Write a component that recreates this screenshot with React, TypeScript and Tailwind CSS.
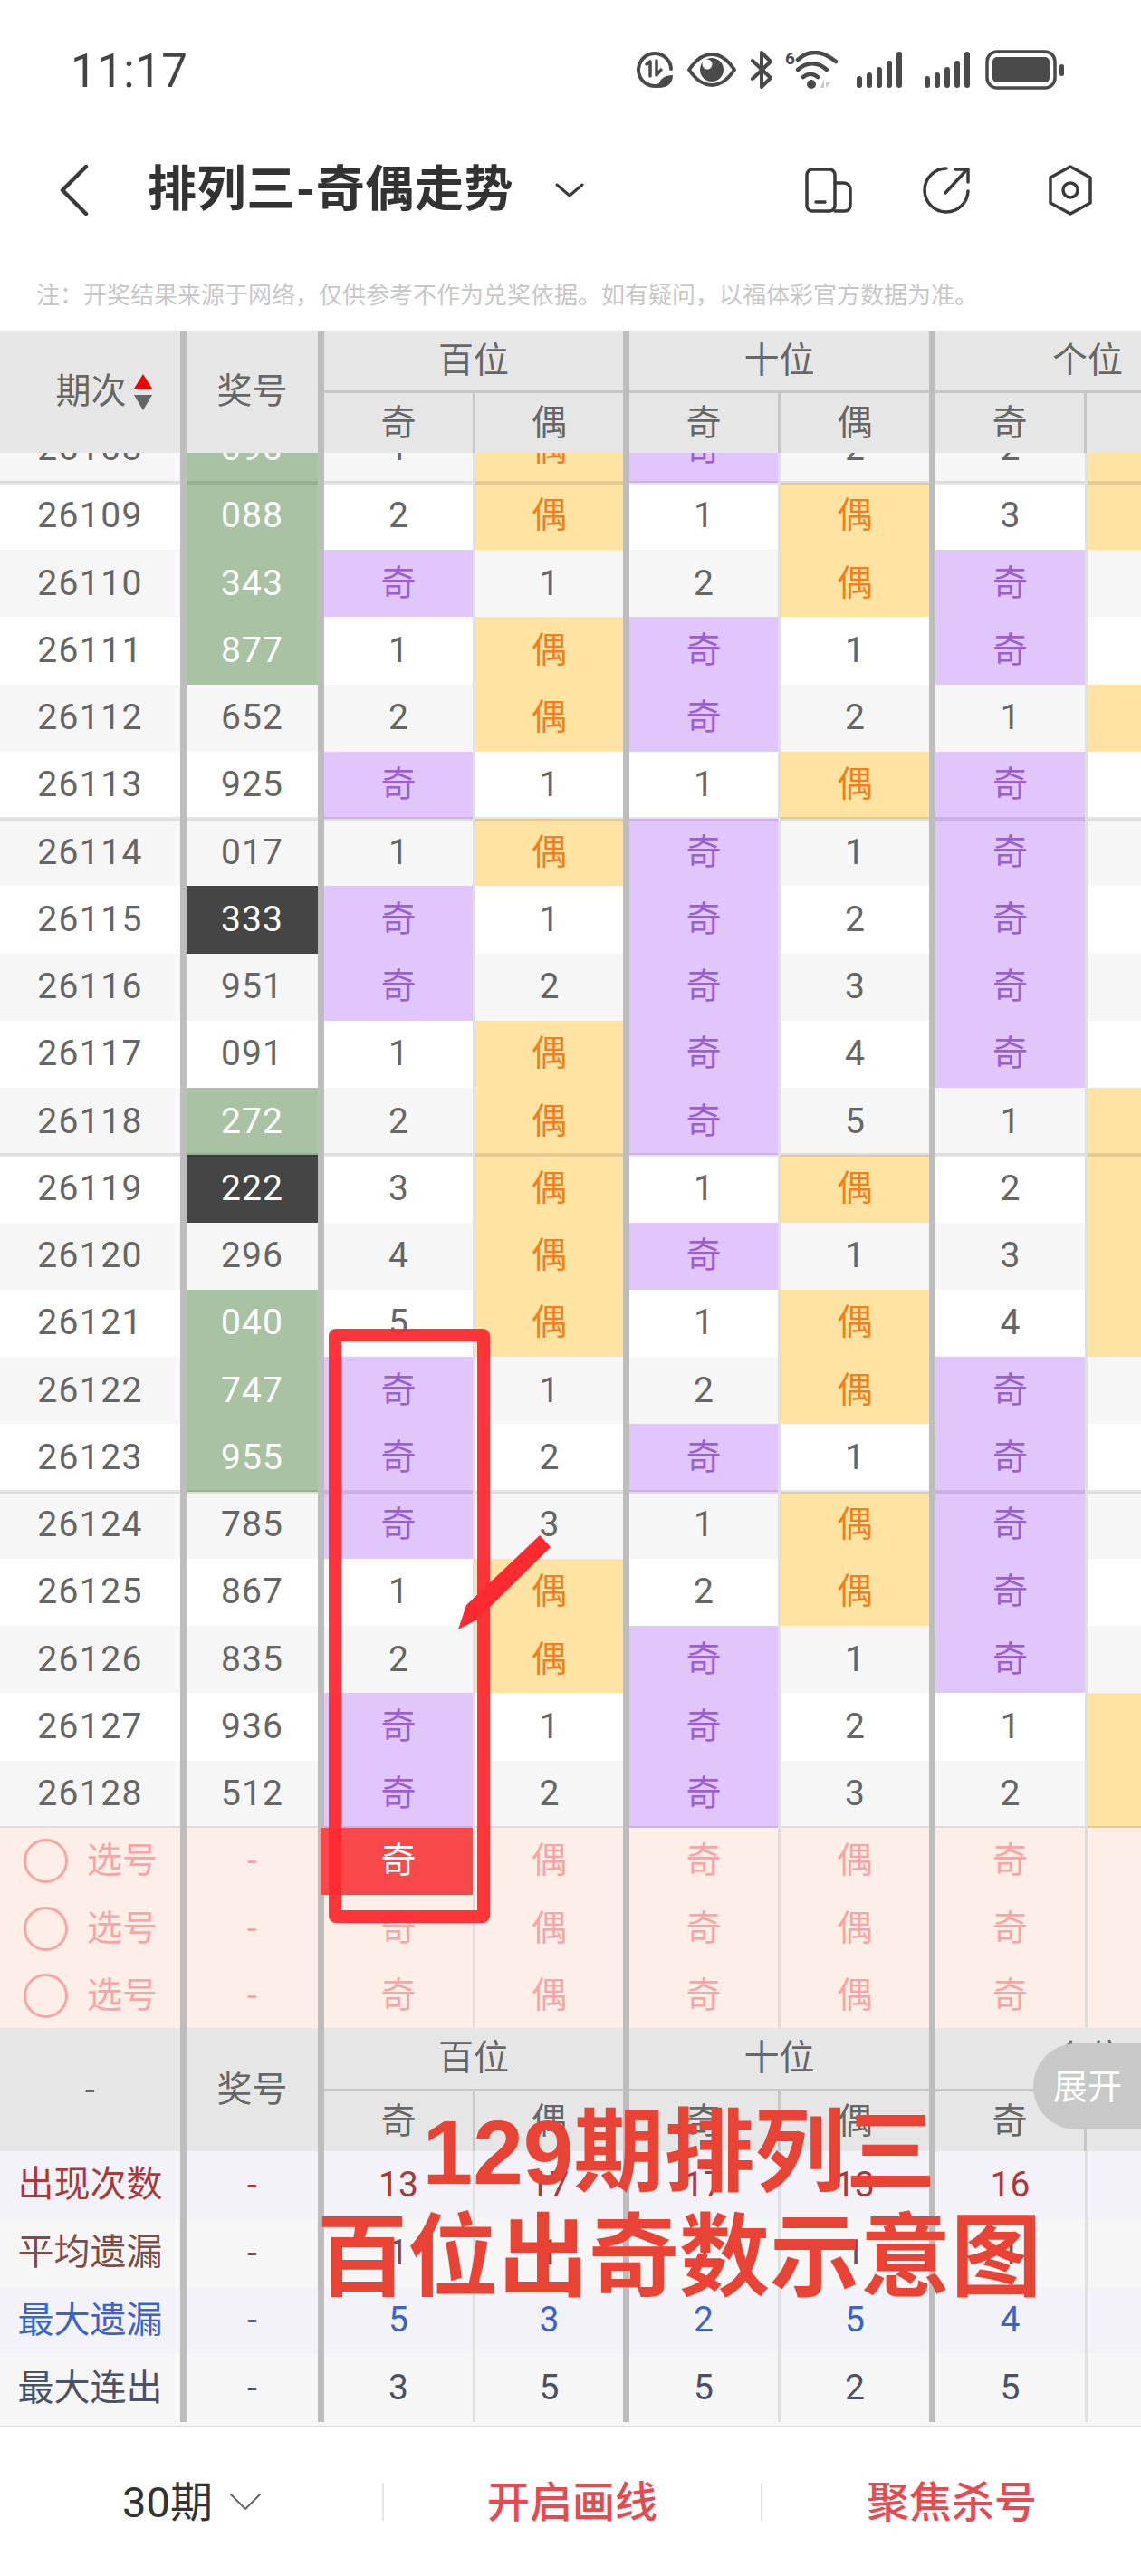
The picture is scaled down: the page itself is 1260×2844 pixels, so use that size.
import React from 'react';

const RAW = `26108 090 g 1 偶 奇 2 2 偶
26109 088 g 2 偶 1 偶 3 偶
26110 343 g 奇 1 2 偶 奇 1
26111 877 g 1 偶 奇 1 奇 2
26112 652 n 2 偶 奇 2 1 偶
26113 925 n 奇 1 1 偶 奇 1
26114 017 n 1 偶 奇 1 奇 2
26115 333 d 奇 1 奇 2 奇 3
26116 951 n 奇 2 奇 3 奇 4
26117 091 n 1 偶 奇 4 奇 5
26118 272 g 2 偶 奇 5 1 偶
26119 222 d 3 偶 1 偶 2 偶
26120 296 n 4 偶 奇 1 3 偶
26121 040 g 5 偶 1 偶 4 偶
26122 747 g 奇 1 2 偶 奇 1
26123 955 g 奇 2 奇 1 奇 2
26124 785 n 奇 3 1 偶 奇 3
26125 867 n 1 偶 2 偶 奇 4
26126 835 n 2 偶 奇 1 奇 5
26127 936 n 奇 1 奇 2 1 偶
26128 512 n 奇 2 奇 3 2 偶`;

const rows = RAW.split('\n').map((l) => {
  const p = l.split(' ');
  return { id: p[0], num: p[1], kind: p[2], vals: p.slice(3) };
});

const NOTE =
  '注\uFF1A开奖结果来源于网络\uFF0C仅供参考不作为兑奖依据\u3002如有疑问\uFF0C以福体彩官方数据为准\u3002';

const GRID = 'grid grid-cols-[206px_152px_167px_170px_167px_171px_168px_168px] w-[1369px]';
const THICK = 'border-r-[7px] border-r-[#bdbdbd]';
const THIN = 'border-r-[3px] border-r-[#e0e0e0]';
const THIN_SEL = 'border-r-[3px] border-r-[#e2dcd8]';
const THIN_HEAD = 'border-r-[3px] border-r-[#c6c6c6]';
const BORDERS = [THIN, THICK, THIN, THICK, THIN, 'border-r-0'];
const SEL_BORDERS = [THIN_SEL, THICK, THIN_SEL, THICK, THIN_SEL, 'border-r-0'];
const HEAD_BORDERS = [THIN_HEAD, THICK, THIN_HEAD, THICK, THIN_HEAD, 'border-r-0'];
const CELL = 'flex items-center justify-center min-w-0';

function sepClass(i: number) {
  if (i % 5 === 1) return 'shadow-[inset_0_2px_0_rgba(0,0,0,0.1)]';
  if (i % 5 === 0) return 'shadow-[inset_0_-2px_0_rgba(0,0,0,0.1)]';
  return '';
}

function HeaderBlock({ left, className }: { left: React.ReactNode; className: string }) {
  const groups = ['百位', '十位', '个位'];
  return (
    <div className={`${GRID} ${className} bg-[#e6e6e6] text-[#666666]`}>
      <div className={`${CELL} ${THICK}`}>{left}</div>
      <div className={`${CELL} ${THICK}`}>奖号</div>
      {groups.map((g, gi) => (
        <div key={g} className={`col-span-2 flex flex-col ${gi < 2 ? THICK : ''}`}>
          <div className={`${CELL} flex-1 border-b-[3px] border-b-[#c6c6c6]`}>{g}</div>
          <div className="grid grid-cols-[167px_1fr] h-[66px]">
            <div className={`${CELL} ${HEAD_BORDERS[0]}`}>奇</div>
            <div className={`${CELL}`}>偶</div>
          </div>
        </div>
      ))}
    </div>
  );
}

function DataRow({ r, i }: { r: (typeof rows)[number]; i: number }) {
  const bg = parseInt(r.id, 10) % 2 === 0 ? 'bg-[#f6f6f6]' : 'bg-white';
  const sep = sepClass(i);
  const numCls =
    r.kind === 'g'
      ? 'bg-[#a8c2a3] text-white'
      : r.kind === 'd'
        ? 'bg-[#454545] text-white'
        : `${bg} text-[#666666]`;
  return (
    <div className={`${GRID} h-[74.25px] text-[#666666]`}>
      <div className={`${CELL} ${THICK} ${bg} ${sep} tracking-[1.4px]`}>{r.id}</div>
      <div className={`${CELL} ${THICK} ${numCls} ${sep} tracking-[1px]`}>{r.num}</div>
      {r.vals.map((v, j) => {
        const c =
          v === '奇'
            ? 'bg-[#e1c6fb] text-[#9b5fd0]'
            : v === '偶'
              ? 'bg-[#fee3a2] text-[#f07f1f]'
              : bg;
        return (
          <div key={j} className={`${CELL} ${BORDERS[j]} ${c} ${sep}`}>
            {v}
          </div>
        );
      })}
    </div>
  );
}

function SelectRow({ first }: { first: boolean }) {
  const vals = ['奇', '偶', '奇', '偶', '奇', '偶'];
  return (
    <div className={`${GRID} h-[74.25px] bg-[#fdeee8] text-[#f7a5a5]`}>
      <div className={`flex items-center ${THICK} pl-[26px] gap-[21px]`}>
        <span className="w-[49px] h-[49px] rounded-full border-[3px] border-[#f7a5a5]" />
        <span>选号</span>
      </div>
      <div className={`${CELL} ${THICK}`}>-</div>
      {vals.map((v, j) => (
        <div
          key={j}
          className={
            first && j === 0
              ? `${CELL} ${SEL_BORDERS[j]} -ml-[4px] pl-[4px] bg-[#f9484a] text-white`
              : `${CELL} ${SEL_BORDERS[j]}`
          }
        >
          {v}
        </div>
      ))}
    </div>
  );
}

const STATS = [
  { label: '出现次数', color: 'text-[#a83a3e]', bg: 'bg-[#f2f2f8]', vals: ['13', '17', '17', '13', '16', '14'] },
  { label: '平均遗漏', color: 'text-[#7d4d48]', bg: 'bg-[#f6f6f6]', vals: ['1', '1', '1', '1', '1', '1'] },
  { label: '最大遗漏', color: 'text-[#3d63c6]', bg: 'bg-[#f2f2f8]', vals: ['5', '3', '2', '5', '4', '5'] },
  { label: '最大连出', color: 'text-[#4a5263]', bg: 'bg-[#f6f6f6]', vals: ['3', '5', '5', '2', '5', '3'] },
];

function StatusIcons() {
  return (
    <div className="flex items-center text-[#4a4a4a]">
      <svg width="40" height="42" viewBox="0 0 40 42" fill="none" stroke="currentColor">
        <path d="M26 38 A18 18 0 1 1 38 20" strokeWidth="4" strokeLinecap="round" />
        <path d="M11 15 L15 12 V28" strokeWidth="3.5" strokeLinecap="round" strokeLinejoin="round" />
        <path d="M22 11 V27 L27 21" strokeWidth="3.5" strokeLinecap="round" strokeLinejoin="round" />
        <path d="M24 41 C24 32 30 27 40 27 C40 36 34 41 24 41 Z" fill="currentColor" stroke="none" />
      </svg>
      <svg className="ml-[16px]" width="54" height="38" viewBox="0 0 54 38" fill="none">
        <path d="M2 19 C10 7 18 2 27 2 C36 2 44 7 52 19 C44 31 36 36 27 36 C18 36 10 31 2 19 Z" stroke="currentColor" strokeWidth="4" strokeLinejoin="round" />
        <circle cx="27" cy="19" r="13" fill="currentColor" />
        <circle cx="22" cy="13" r="5.5" fill="white" />
      </svg>
      <svg className="ml-[16px]" width="25" height="42" viewBox="0 0 25 42" fill="none" stroke="currentColor" strokeWidth="4" strokeLinecap="round" strokeLinejoin="round">
        <path d="M2 11 L22 30 L12 40 V24" />
        <path d="M2 31 L22 12 L12 2 V17" />
      </svg>
      <svg className="ml-[13px]" width="58" height="42" viewBox="0 0 58 42" fill="none">
        <text x="0" y="15" fontSize="19" fontWeight="700" fill="currentColor" fontFamily="Roboto, sans-serif">6</text>
        <path d="M14 10 C26 -1 40 -1 56 12" stroke="currentColor" strokeWidth="4.5" strokeLinecap="round" />
        <path d="M14 21 C24 12 36 12 46 21" stroke="currentColor" strokeWidth="4.5" strokeLinecap="round" />
        <path d="M20 29 C25 25 31 25 36 29" stroke="currentColor" strokeWidth="4.5" strokeLinecap="round" />
        <circle cx="29" cy="37" r="5" fill="currentColor" />
        <path d="M39 41 H43 V31 Z M45 31 V41 L50 35 H45 Z" fill="#c9c9c9" />
      </svg>
      {[0, 1].map((k) => (
        <svg key={k} className={k === 0 ? 'ml-[21px]' : 'ml-[24px]'} width="51" height="42" viewBox="0 0 51 42" fill="currentColor">
          <rect x="0" y="28" width="6" height="13" rx="3" />
          <rect x="11" y="24" width="6" height="17" rx="3" />
          <rect x="22" y="18" width="6" height="23" rx="3" />
          <rect x="33" y="11" width="6" height="30" rx="3" />
          <rect x="44" y="1" width="6" height="40" rx="3" />
        </svg>
      ))}
      <svg className="ml-[16px]" width="88" height="44" viewBox="0 0 88 44" fill="none">
        <rect x="2" y="2" width="75" height="40" rx="11" stroke="currentColor" strokeWidth="3.5" />
        <rect x="8" y="8" width="63" height="28" rx="5" fill="currentColor" />
        <rect x="82" y="16" width="5" height="13" rx="2.5" fill="currentColor" />
      </svg>
    </div>
  );
}

function NavBar() {
  return (
    <div className="h-[120px] flex items-center pl-[66px] pr-[53px]">
      <svg width="32" height="56" viewBox="0 0 32 56" fill="none" stroke="#3a3a3a" strokeWidth="4.5" strokeLinecap="round" strokeLinejoin="round">
        <path d="M29 2 L3 28 L29 54" />
      </svg>
      <span className="ml-[65px] text-[54px] tracking-[0.6px] leading-none font-bold text-[#333333] whitespace-nowrap">排列三-奇偶走势</span>
      <svg className="ml-[46px]" width="32" height="16" viewBox="0 0 32 16" fill="none" stroke="#3a3a3a" strokeWidth="3" strokeLinecap="round" strokeLinejoin="round">
        <path d="M2 2 L16 14 L30 2" />
      </svg>
      <svg className="ml-auto" width="52" height="50" viewBox="0 0 52 50" fill="none" stroke="#3a3a3a" strokeWidth="3.5" strokeLinecap="round" strokeLinejoin="round">
        <rect x="2" y="2" width="31" height="46" rx="6" />
        <path d="M33 17 H43 A7 7 0 0 1 50 24 V42 A6 6 0 0 1 44 48 H33" />
        <path d="M12 38 H22" />
      </svg>
      <svg className="ml-[78px]" width="52" height="52" viewBox="0 0 52 52" fill="none" stroke="#3a3a3a" strokeWidth="3.5" strokeLinecap="round" strokeLinejoin="round">
        <path d="M26 2 A24 24 0 1 0 50 27" />
        <path d="M25 29 L49 3" />
        <path d="M36 3 H50 V17" />
      </svg>
      <svg className="ml-[86px]" width="50" height="56" viewBox="0 0 50 56" fill="none" stroke="#3a3a3a" strokeWidth="3.5" strokeLinejoin="round">
        <path d="M25 2 L47 14 V42 L25 54 L3 42 V14 Z" />
        <circle cx="25" cy="28" r="8" />
      </svg>
    </div>
  );
}

export default function App() {
  return (
    <div className="relative w-[1260px] h-[2844px] bg-white overflow-hidden flex flex-col font-['Roboto','Noto_Sans_CJK_SC',sans-serif] text-[39px] leading-none">
      <div className="h-[150px] flex items-center justify-between pl-[78px] pr-[84px] pt-[4px]">
        <span className="text-[51px] text-[#444444] pt-[2px] tracking-[0.5px]">11:17</span>
        <StatusIcons />
      </div>
      <NavBar />
      <div className="h-[95px] pt-[43px] pl-[40px] text-[26px] text-[#c8c8c8] whitespace-nowrap">
        {NOTE}
      </div>

      <div className="flex flex-col overflow-hidden">
        <HeaderBlock
          className="h-[135px]"
          left={
            <span className="flex items-center gap-[8px] pl-[30px]">
              <span>期次</span>
              <svg width="20" height="40" viewBox="0 0 20 40">
                <path d="M10 0 L20 16 H0 Z" fill="#f00000" />
                <path d="M0 23 H20 L10 40 Z" fill="#666666" />
              </svg>
            </span>
          }
        />
        <div className="h-[1739px] overflow-hidden">
          <div className="-mt-[42px] pt-[0.5px]">
            {rows.map((r, i) => (
              <DataRow key={r.id} r={r} i={i} />
            ))}
            {[0, 1, 2].map((k) => (
              <SelectRow key={k} first={k === 0} />
            ))}
          </div>
        </div>
        <HeaderBlock className="h-[136px]" left={<span>-</span>} />
        {STATS.map((s) => (
          <div key={s.label} className={`${GRID} h-[74.75px] ${s.bg} ${s.color}`}>
            <div className={`${CELL} ${THICK} whitespace-nowrap text-[40px]`}>{s.label}</div>
            <div className={`${CELL} ${THICK}`}>-</div>
            {s.vals.map((v, j) => (
              <div key={j} className={`${CELL} ${BORDERS[j]}`}>
                {v}
              </div>
            ))}
          </div>
        ))}
        <div className="h-[6px] bg-[#f6f6f6] border-b-[2px] border-b-[#dddddd]" />
      </div>

      <div className="flex-1 flex items-center">
        <div className="w-[422px] flex items-center justify-center gap-[18px] pl-[2px] text-[47px] text-[#333333]">
          <span>30期</span>
          <svg width="36" height="20" viewBox="0 0 36 20" fill="none" stroke="#666666" strokeWidth="2" strokeLinecap="round" strokeLinejoin="round">
            <path d="M2 2 L18 18 L34 2" />
          </svg>
        </div>
        <div className="w-[2px] h-[42px] bg-[#e6e6e6]" />
        <div className="w-[416px] text-center text-[47px] font-medium text-[#e64a50]">开启画线</div>
        <div className="w-[2px] h-[42px] bg-[#e6e6e6]" />
        <div className="flex-1 text-center text-[47px] font-medium text-[#e64a50]">聚焦杀号</div>
      </div>

      {/* 标注:红框 */}
      <div className="absolute left-[363px] top-[1467px] w-[178px] h-[656px] border-[14px] border-[#ff2a30] rounded-[8px] opacity-95" />
      {/* 标注:箭头 */}
      <svg className="absolute left-[490px] top-[1680px]" width="130" height="130" viewBox="0 0 130 130">
        <path d="M106 15 L118 28 L37 108 L16 119 L25 92 Z" fill="#ff2a30" />
      </svg>
      {/* 展开按钮 */}
      <div className="absolute right-0 top-[2256px] w-[119px] h-[95px] rounded-l-[48px] bg-[#c8c8c8] flex items-center pl-[22px] text-[38px] text-white">
        展开
      </div>
      {/* 标注文字 */}
      <div className="absolute left-[340px] top-[2318px] w-[820px] text-center font-['Liberation_Sans','Noto_Sans_CJK_SC',sans-serif] font-bold text-[100px] leading-[116px] text-[#e94335] whitespace-nowrap">
        <div>129期排列三</div>
        <div>百位出奇数示意图</div>
      </div>
    </div>
  );
}
